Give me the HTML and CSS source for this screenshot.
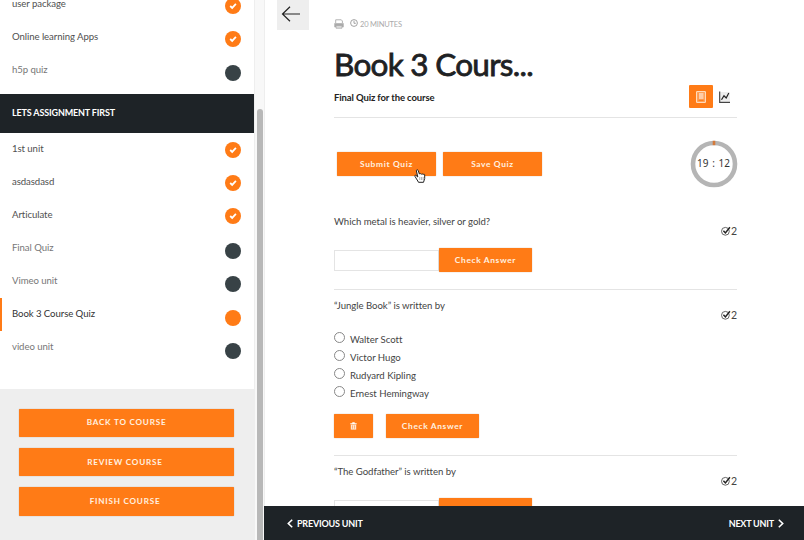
FILE: index.html
```html
<!DOCTYPE html>
<html lang="en">
<head>
<meta charset="utf-8">
<title>Book 3 Course Quiz</title>
<link rel="stylesheet" href="styles.css">
</head>
<body>
<svg class="defs" aria-hidden="true">
  <symbol id="tick" viewBox="0 0 16 16"><path d="M5.200 8 7.200 9.900 10.900 5.900" fill="none" stroke="#fff" stroke-width="1.8"/></symbol>
  <symbol id="mark" viewBox="0 0 10 10"><circle cx="4.4" cy="5.3" r="3.9" fill="none" stroke="#555" stroke-width=".9"/><path d="M2.4 4.800 4.400 6.900 8.900 1.300" fill="none" stroke="#222" stroke-width="1.500"/></symbol>
</svg>
<div class="app">
  <aside class="sidebar">
    <ul class="units units-top">
      <li class="done"><span>user package</span><i><svg><use href="#tick"/></svg></i></li>
      <li class="done"><span>Online learning Apps</span><i><svg><use href="#tick"/></svg></i></li>
      <li><span>h5p quiz</span><i></i></li>
    </ul>
    <h2 class="section"><span>LETS ASSIGNMENT FIRST</span></h2>
    <ul class="units">
      <li class="done"><span>1st unit</span><i><svg><use href="#tick"/></svg></i></li>
      <li class="done"><span>asdasdasd</span><i><svg><use href="#tick"/></svg></i></li>
      <li class="done"><span>Articulate</span><i><svg><use href="#tick"/></svg></i></li>
      <li><span>Final Quiz</span><i></i></li>
      <li><span>Vimeo unit</span><i></i></li>
      <li class="current"><span>Book 3 Course Quiz</span><i></i></li>
      <li><span>video unit</span><i></i></li>
    </ul>
    <div class="actions">
      <button>BACK TO COURSE</button>
      <button class="review">REVIEW COURSE</button>
      <button class="finish">FINISH COURSE</button>
    </div>
  </aside>
  <div class="scrollbar"><div class="thumb"></div></div>
  <main class="main">
    <div class="scroll">
      <button class="back" aria-label="Back"><svg width="20" height="18" viewBox="0 0 20 18" fill="none" stroke="#222" stroke-width="1.2"><path d="M9 1.8 1.5 9 9 16.2M1.5 9H19"/></svg></button>
      <div class="content">
        <div class="meta">
          <svg class="printer" width="10" height="10" viewBox="0 0 10 10"><path d="M1.700 4V.800h5.600L8.400 2v2" fill="#fff" stroke="#aaa" stroke-width=".9"/><path d="M.3 4.200h9.400v4H.3z" fill="#aaa"/><path d="M2 6.700h6v2.500H2z" fill="#e2e2e2" stroke="#aaa" stroke-width=".8"/></svg>
          <svg class="clock" width="8" height="8" viewBox="0 0 8 8" fill="none" stroke="#999" stroke-width=".9"><circle cx="4" cy="4" r="3.400"/><path d="M4 1.800V4.300H5.800"/></svg>
          <span>20 MINUTES</span>
        </div>
        <h1>Book 3 Cours...</h1>
        <div class="subhead">
          <strong>Final Quiz for the course</strong>
          <div class="tabs">
            <span class="tab-on"><svg width="10" height="12" viewBox="0 0 10 12"><path d="M.6.600h8.800v10.800H.600z" fill="#ff9a4e" stroke="#ffe5cc" stroke-width="1"/><path d="M3 3h4.500M3 5h4.500M3 7h4.500" stroke="#fff" stroke-width="1.100"/><path d="M2.500 9.500h5" stroke="#ff7e1c"/></svg></span>
            <svg width="11" height="12" viewBox="0 0 11 12" fill="none"><path d="M1.500 1H11v9.500H1.500z" fill="#eee"/><path d="M.7.500v10.800H11" stroke="#444" stroke-width="1.200"/><path d="M2.500 8.800 5 4.800 7.200 7 9.800 2" stroke="#222" stroke-width="1.200"/></svg>
          </div>
        </div>
        <div class="toolbar">
          <button>Submit Quiz</button><button class="save">Save Quiz</button>
          <div class="timer"><svg width="48" height="48" viewBox="0 0 48 48" fill="none" stroke="#b5b5b5" stroke-width="4.600"><circle cx="24" cy="24" r="21"/><path d="M24 .8v4.400" stroke="#d47a3a" stroke-width="2.600"/></svg><span>19 : 12</span></div>
        </div>
        <section class="q q1">
          <p>Which metal is heavier, silver or gold?</p>
          <div class="marks"><svg><use href="#mark"/></svg>2</div>
          <div class="answer"><input type="text"><button>Check Answer</button></div>
        </section>
        <section class="q q2">
          <p>“Jungle Book” is written by</p>
          <div class="marks"><svg><use href="#mark"/></svg>2</div>
          <ul class="options">
            <li><i></i><span>Walter Scott</span></li>
            <li><i></i><span>Victor Hugo</span></li>
            <li><i></i><span>Rudyard Kipling</span></li>
            <li><i></i><span>Ernest Hemingway</span></li>
          </ul>
          <div class="buttons">
            <button class="trash" aria-label="Clear"><svg width="7" height="8" viewBox="0 0 7 8"><path d="M.3 1.200h6.400v1H.300zM2.300.2h2.400v1H2.300z" fill="#fff"/><path d="M.8 2.600h5.400v5H.800z" fill="#ffe6d2"/><path d="M2.500 3.400v3.300M4.500 3.400v3.300" stroke="#ff7e1c" stroke-width=".5"/></svg></button>
            <button>Check Answer</button>
          </div>
        </section>
        <section class="q q3">
          <p>“The Godfather” is written by</p>
          <div class="marks"><svg><use href="#mark"/></svg>2</div>
          <div class="answer"><input type="text"><button aria-label="Check Answer"></button></div>
        </section>
      </div>
    </div>
    <nav class="pager">
      <span class="prev"><svg width="6" height="9" viewBox="0 0 6 9"><path d="M5.200.7 1.300 4.500 5.200 8.300"/></svg>PREVIOUS UNIT</span>
      <span class="next">NEXT UNIT<svg width="6" height="9" viewBox="0 0 6 9"><path d="M.8.700 4.700 4.500.8 8.300"/></svg></span>
    </nav>
  </main>
</div>
<svg class="cursor" width="12" height="14" viewBox="0 0 12 14"><path d="M3.800 8 2 6.400C1 5.900.4 6.700 1 7.500L3.800 12 4.500 13.300h5L10.700 9.500V5.800C10.500 5 9.500 5 9.200 5.600 9 4.800 7.800 4.700 7.400 5.300 7 4.500 5.900 4.400 5.400 5L4.100 1.300C3.600.3 2 .8 2.400 2z" fill="#fff" stroke="#222" stroke-width="1"/><path d="M5.800 8v3M7.600 8v3M9.200 8v3" stroke="#777" stroke-width=".6"/></svg>
</body>
</html>
```
FILE: styles.css
```css
* { box-sizing: border-box; margin: 0; padding: 0; }
body { font-family: Lato, "Noto Sans", sans-serif; font-size: 9.6px; color: #444; background: #fff; overflow: hidden; }
ul { list-style: none; }
.defs { position: absolute; width: 0; height: 0; }
.app { display: flex; width: 804px; height: 540px; overflow: hidden; }
button { font: 700 8.4px Lato, sans-serif; letter-spacing: .65px; color: #fff1e0; background: #ff7b16; border: 0; border-radius: 1px; box-shadow: 0 0 1px #a87b58; display: flex; align-items: center; justify-content: center; padding-bottom: 1px; }

.sidebar { width: 254px; flex: none; display: flex; flex-direction: column; height: 540px; }
.units-top { margin-top: -13px; height: 107px; flex: none; }
.units li { height: 33.1px; display: flex; align-items: center; justify-content: space-between; padding: 0 13.500px 0 12px; color: #777; letter-spacing: -.07px; }
.units li span { margin-bottom: 1.4px; }
.units-top li span { margin-bottom: 0; }
.units li.done { color: #505050; }
.units li.current { color: #333; border-left: 2px solid #ff7b16; padding-left: 10px; }
.units i { width: 16px; height: 16px; border-radius: 50%; background: #384246; margin-top: 6px; }
.units-top i { margin-top: 7px; }
.units .done i { background: #ff7b16; margin-top: 2px; }
.units-top .done i { margin-top: 4px; }
.units .current i { background: #ff7b16; }
.units i svg { display: block; width: 16px; height: 16px; }
.section { height: 38.500px; flex: none; background: #1e2327; color: #fff; font-size: 9px; letter-spacing: -.15px; font-weight: 700; display: flex; align-items: center; padding: 0 0 2px 12px; }
.actions { margin-top: auto; height: 151px; background: #eee; padding: 19.500px 20px 0 19px; display: flex; flex-direction: column; gap: 10.800px; }
.actions button { height: 28.500px; font-size: 8.100px; letter-spacing: .8px; flex: none; }
.actions .review, .actions .finish { padding-right: 3px; }

.scrollbar { width: 10px; flex: none; background: #f8f8f8; border-left: 1px solid #eee; padding: 109px 2px 0 2px; }
.thumb { width: 6px; height: 440px; background: #b8b8b8; border-radius: 3px; }

.main { flex: 1; display: flex; flex-direction: column; min-width: 0; }
.scroll { height: 506px; border-left: 1px solid #eee; display: flex; align-items: flex-start; padding-left: 12px; overflow: hidden; }
.back { width: 32px; height: 30px; background: #eee; border-radius: 0; box-shadow: none; flex: none; padding: 0 4px 2px 0; }
.content { width: 403px; margin-left: 25px; }
.meta { margin-top: 17px; height: 14px; display: flex; align-items: center; font-size: 7.500px; letter-spacing: -.2px; color: #aaa; }
.clock { margin: -2px 2px 0 6px; }
.printer { flex: none; }
h1 { font-size: 31.500px; font-weight: 400; letter-spacing: -.72px; line-height: 38px; height: 40px; margin-top: 14px; color: #1e2123; -webkit-text-stroke: .8px #1e2123; stroke-linejoin: round; }
.subhead { height: 33px; border-bottom: 1px solid #e4e4e4; display: flex; justify-content: space-between; }
.subhead strong { font-size: 9.500px; letter-spacing: -.12px; line-height: 12px; margin-top: 7px; color: #222; }
.tabs { display: flex; align-items: center; gap: 6px; height: 23px; margin-right: 7px; }
.tab-on { width: 24px; height: 23px; background: #ff7b16; border-radius: 1px; display: flex; align-items: center; justify-content: center; }
.toolbar { display: flex; align-items: flex-start; padding: 34px 0 0 3px; height: 90px; }
.toolbar button { width: 99px; height: 24px; margin-right: 7px; }
.timer { position: relative; width: 48px; height: 48px; margin: -12.500px -1px 0 auto; }
.timer svg { display: block; }
.timer span { position: absolute; inset: 0 1px 0 0; text-align: center; color: #333; font: 10px/47px "Noto Sans", sans-serif; word-spacing: 1px; white-space: nowrap; }
.q { border-bottom: 1px solid #e4e4e4; }
.q p { font-size: 9.600px; line-height: 14px; padding-top: 7px; letter-spacing: -.04px; }
.marks { display: flex; justify-content: flex-end; align-items: center; font-size: 10.500px; line-height: 12px; height: 12px; margin-top: -4px; }
.marks svg { width: 10px; height: 10px; }
.answer { display: flex; align-items: center; margin-top: 11px; }
.answer input { width: 105px; height: 21px; border: 1px solid #e4e4e4; }
.answer button, .buttons button { width: 93px; height: 24px; }
.q1 { height: 82px; }
.q2, .q3 { padding-top: 2px; }
.q2 { height: 166px; }
.options { padding-top: 9px; height: 93px; }
.options li { display: flex; height: 18px; align-items: center; gap: 5px; letter-spacing: -.02px; }
.options i { width: 11px; height: 11px; border: 1px solid #888; border-radius: 50%; margin-top: -4px; }
.buttons { display: flex; gap: 13px; }
.buttons .trash { width: 39px; }
.pager { height: 34px; background: #1e2327; display: flex; justify-content: space-between; align-items: center; padding: 0 20px 0 23px; color: #fff; font-size: 9px; letter-spacing: -.2px; font-weight: 700; }
.pager span { display: flex; align-items: center; gap: 4px; }
.pager path { fill: none; stroke: #fff; stroke-width: 1.600; }
.cursor { position: absolute; left: 414px; top: 169px; }
```
